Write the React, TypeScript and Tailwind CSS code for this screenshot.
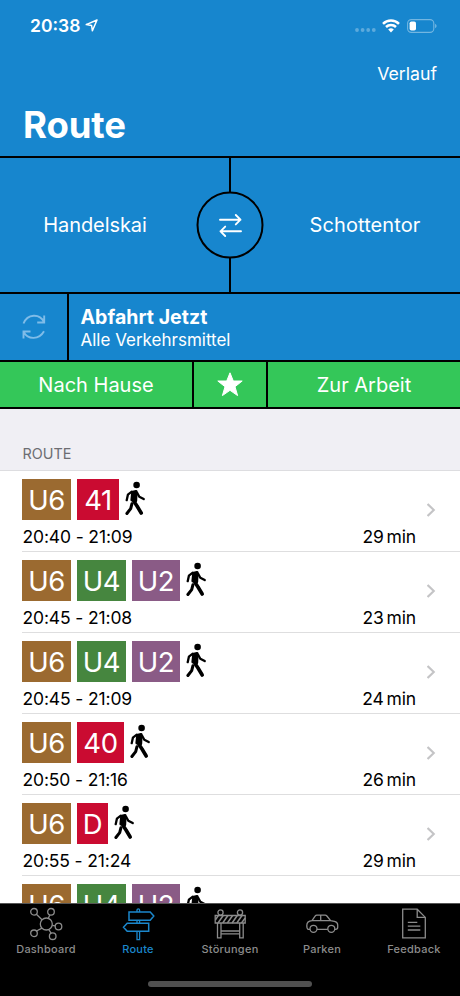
import type { ReactNode } from 'react'

type Line = { name: string; style: string }

type Connection = {
  lines: Line[]
  time: string
  duration: number
}

const U6: Line = { name: 'U6', style: 'w-[49px] bg-[#9b6a30]' }
const U4: Line = { name: 'U4', style: 'w-[49px] bg-[#46863f]' }
const U2: Line = { name: 'U2', style: 'w-[48px] bg-[#8a5b86]' }
const T41: Line = { name: '41', style: 'w-[42px] bg-[#ca0b31]' }
const T40: Line = { name: '40', style: 'w-[47px] bg-[#ca0b31]' }
const TD: Line = { name: 'D', style: 'w-[31px] bg-[#ca0b31]' }

const CONNECTIONS: Connection[] = [
  { lines: [U6, T41], time: '20:40 - 21:09', duration: 29 },
  { lines: [U6, U4, U2], time: '20:45 - 21:08', duration: 23 },
  { lines: [U6, U4, U2], time: '20:45 - 21:09', duration: 24 },
  { lines: [U6, T40], time: '20:50 - 21:16', duration: 26 },
  { lines: [U6, TD], time: '20:55 - 21:24', duration: 29 },
  { lines: [U6, U4, U2], time: '', duration: 0 },
]

function StatusBar() {
  return (
    <div className="flex h-[51px] items-center justify-between pr-[23px] pl-[30px]">
      <div className="flex items-center gap-[4.5px]">
        <span className="text-[17.5px] leading-none font-semibold">20:38</span>
        <svg width="13" height="13" viewBox="0 0 13 13" fill="none" stroke="currentColor" strokeWidth="1.5" strokeLinejoin="round">
          <path d="M12 1 1.2 5.6l5.4.9.8 5.3z" />
        </svg>
      </div>
      <div className="flex items-center">
        <svg width="21" height="4" viewBox="0 0 21 4" fill="currentColor" className="mt-[9px] mr-[6px] opacity-30">
          <circle cx="2" cy="2" r="1.9" />
          <circle cx="7.6" cy="2" r="1.9" />
          <circle cx="13.2" cy="2" r="1.9" />
          <circle cx="18.8" cy="2" r="1.9" />
        </svg>
        <svg width="18" height="14" viewBox="0 0 18 14" fill="none" stroke="currentColor" strokeWidth="2.5" className="mr-[7px]">
          <path d="M1 4.8a11.4 11.4 0 0 1 16 0" />
          <path d="M4 8a7.2 7.2 0 0 1 10 0" />
          <path d="M9 13.4 6.2 10.6a4 4 0 0 1 5.6 0z" fill="currentColor" stroke="none" />
        </svg>
        <svg width="30" height="14" viewBox="0 0 30 14">
          <rect x="0.6" y="0.6" width="26.2" height="12.8" rx="3.8" fill="none" stroke="#fff" strokeOpacity="0.4" strokeWidth="1.1" />
          <rect x="2.6" y="2.4" width="6.4" height="9.2" rx="1.8" fill="#fff" />
          <path d="M28.2 4.8c1.8.7 1.8 3.7 0 4.4z" fill="#fff" fillOpacity="0.45" />
        </svg>
      </div>
    </div>
  )
}

function Walker() {
  return (
    <svg width="20" height="35" viewBox="0 0 20 35" className="mt-[2px]" fill="none" stroke="#000" strokeLinecap="round" strokeLinejoin="round">
      <circle cx="11.6" cy="4" r="3.3" fill="#000" stroke="none" />
      <path d="M7.8 11.2 11 10.6 10.6 19.6 7 19z" fill="#000" strokeWidth="3.2" />
      <path d="M6.8 10.7 2.9 13.7 1.7 19.2" strokeWidth="2.3" />
      <path d="M12 11.6 14.3 15.7 18.7 18.1" strokeWidth="2.3" />
      <path d="M9 20.5 12 25 16.2 32" strokeWidth="3.6" />
      <path d="M6.9 22.8 5.7 27.6 1.9 32.5" strokeWidth="3" />
    </svg>
  )
}

function ConnectionRow({ connection }: { connection: Connection }) {
  return (
    <li className="flex h-[81px] shrink-0 pl-[22px]">
      <div className="flex flex-1 items-start border-b border-[#dededf] pr-[24px]">
        <div className="min-w-0 flex-1 pt-[8px]">
          <div className="flex items-start gap-[6px]">
            {connection.lines.map((line) => (
              <span
                key={line.name}
                className={`flex h-[41px] items-center justify-center pt-[3px] text-[27.5px] leading-none font-normal tracking-[-0.4px] text-white ${line.style}`}
              >
                {line.name}
              </span>
            ))}
            <Walker />
          </div>
          {connection.time && (
            <div className="mt-[6px] flex justify-between pr-[20px] pl-[0.5px] text-[17.5px] leading-[22px]">
              <span className="tracking-[-0.14px]">{connection.time}</span>
              <span className="tracking-[-0.15px] [word-spacing:-2px]">{connection.duration} min</span>
            </div>
          )}
        </div>
        <svg width="9" height="14" viewBox="0 0 9 14" fill="none" stroke="#c4c4c6" strokeWidth="2.1" className="mt-[32px] -ml-[9px]">
          <path d="m.6 1 6.2 6L.6 13" />
        </svg>
      </div>
    </li>
  )
}

const TABS: { label: string; icon: ReactNode }[] = [
  {
    label: 'Dashboard',
    icon: (
      <>
        <circle cx="16.3" cy="17" r="6" />
        <circle cx="4" cy="4.8" r="3.3" />
        <circle cx="21" cy="4.8" r="3.3" />
        <circle cx="28.5" cy="19.5" r="3.3" />
        <circle cx="4" cy="26.3" r="3.3" />
        <circle cx="22.7" cy="29.2" r="3.3" />
        <path d="m6.4 7.2 5.6 5.6M19.8 7.9l-1.5 3.4M22.2 18.3l3 .6M6.5 24l5.5-2.8M18.8 22.5l2.4 3.8" />
      </>
    ),
  },
  {
    label: 'Route',
    icon: (
      <>
        <path d="M15 5V3.2a1.3 1.3 0 0 1 2.6 0V5M15 13.2v3M17.6 13.2v3M15 24.2v8.4h2.6v-8.4" />
        <path d="M7 5h21.2l3.6 4-3.6 4.200H7z" strokeWidth="1.5" />
        <path d="M26.7 16.2H5.2l-3.7 4 3.7 4h21.5z" strokeWidth="1.5" />
      </>
    ),
  },
  {
    label: 'Störungen',
    icon: (
      <>
        <circle cx="6.5" cy="5.5" r="2.6" />
        <circle cx="26" cy="5.5" r="2.6" />
        <path d="M1.2 8.5h30V16h-30zM3.5 16v14.8H7V16M25.700 16v14.8h3.500V16M7 24h18.700M7 26.800h18.700" />
        <path d="m1.5 12.8 2.8-4.3M4 16l5.200-7.500M8.700 16l5.200-7.500M13.400 16l5.200-7.500M18.100 16l5.200-7.500M22.800 16l5.200-7.500M27.500 16l3.700-5" strokeWidth="1.5" />
      </>
    ),
  },
  {
    label: 'Parken',
    icon: (
      <>
        <circle cx="7.5" cy="21.8" r="3.5" />
        <circle cx="25.3" cy="21.8" r="3.5" />
        <path d="M4 22.3H2.2C1 22 .8 21 .8 18.5c0-3 1.2-4.5 5.2-4.8l3.3-4.8c.4-.6.8-.8 1.5-.8h8.4c.8 0 1.200.3 1.700.9l3.700 4.700 3.800.6c2 .4 3.300 1.600 3.300 3.600v2.400c0 1.300-.6 2-2 2h-.9M11 22.300h10.800M6 13.700h18.600M14.700 8.100v5.600" />
      </>
    ),
  },
  {
    label: 'Feedback',
    icon: (
      <>
        <path d="M4.7 2.2h14.5l8.1 8.2v20.5H4.7z" />
        <path d="M19.2 2.2v8.2h8.1M9.8 15.3h9.5M9.8 19.2h12.500M9.800 23h12.500" />
      </>
    ),
  },
]

function TabBar({ active }: { active: string }) {
  return (
    <nav className="flex h-[93px] shrink-0 flex-col items-center border-t border-[#555] bg-black">
      <div className="flex w-full">
        {TABS.map((tab) => (
          <div
            key={tab.label}
            className={`flex flex-1 flex-col items-center pt-[3px] ${tab.label === active ? 'text-[#1b87cc]' : 'text-[#8c8c8c]'}`}
          >
            <svg width="33" height="34" viewBox="0 0 33 34" fill="none" stroke="currentColor" strokeWidth="1.3">
              {tab.icon}
            </svg>
            <span className="mt-px text-[11px] leading-[14px] font-medium tracking-[0.25px]">
              {tab.label}
            </span>
          </div>
        ))}
      </div>
      <div className="mt-[25px] h-[6px] w-[164px] rounded-full bg-[#505050]" />
    </nav>
  )
}

export default function App() {
  return (
    <div className="flex h-[996px] w-[460px] flex-col overflow-hidden bg-white font-['Inter','Liberation_Sans',sans-serif] text-black">
      <header className="shrink-0 bg-[#1786ce] text-white">
        <div className="h-[156px]">
          <StatusBar />
          <div className="flex h-[46px] items-center justify-end pr-[23px] text-[17.7px]">
            Verlauf
          </div>
          <h1 className="pl-[23px] text-[36.5px] leading-[57px] font-bold tracking-[-0.1px]">Route</h1>
        </div>

        <div className="relative flex h-[138px] border-y-2 border-black text-[20px]">
          <div className="flex flex-1 items-center justify-center border-r border-black pr-[39px] tracking-[-0.1px]">
            Handelskai
          </div>
          <div className="flex flex-1 items-center justify-center border-l border-black pl-[39px] tracking-[0.1px]">
            Schottentor
          </div>
          <div className="absolute top-1/2 left-1/2 flex h-[67px] w-[67px] -translate-x-1/2 -translate-y-1/2 items-center justify-center rounded-full border-2 border-black bg-[#1786ce]">
            <svg width="24" height="24" viewBox="0 0 24 24" fill="none" stroke="currentColor" strokeWidth="1.9" strokeLinecap="round" strokeLinejoin="round">
              <path d="M1.5 6.2H22M17.3 1.5 22 6.200l-4.700 4.700M22.500 17.800H2M6.700 13.100 2 17.800l4.700 4.700" />
            </svg>
          </div>
        </div>

        <div className="flex h-[66px]">
          <div className="flex w-[69px] items-center justify-center border-r-2 border-black">
            <svg width="24" height="26" viewBox="0 0 24 26" fill="none" stroke="#7fbce8" strokeWidth="1.9">
              <path d="M1.5 9.500C5.500-.2 17.500-.8 22 8M22.200 1.500v7h-7M22 17.200c-4.800 8.500-16 9-20.500.5M1.500 24.500v-7h7" />
            </svg>
          </div>
          <div className="flex flex-col justify-center pt-[3px] pl-[11.5px]">
            <span className="text-[19.5px] leading-[23px] font-bold tracking-[0.05px]">Abfahrt Jetzt</span>
            <span className="text-[17px] leading-[22px]">Alle Verkehrsmittel</span>
          </div>
        </div>

        <div className="flex h-[49px] border-y-2 border-black bg-[#34c759] text-[20px]">
          <div className="flex w-[194px] items-center justify-center border-r-2 border-black">
            Nach Hause
          </div>
          <div className="flex w-[74px] items-center justify-center border-r-2 border-black">
            <svg width="26" height="25" viewBox="0 0 26 25" fill="currentColor" stroke="currentColor" strokeLinejoin="round">
              <path d="m13 .8 3.3 8.200h8.900l-7.200 5.700 2.600 8.900-7.600-5.300-7.600 5.300L8 14.700.8 9h8.900z" />
            </svg>
          </div>
          <div className="flex flex-1 items-center justify-center">Zur Arbeit</div>
        </div>
      </header>

      <div className="flex h-[62px] shrink-0 items-end border-b border-[#dddde0] bg-[#f0eff4] pb-[6px] pl-[22.5px] text-[14.4px] leading-[20px] text-[#6d6d72]">
        ROUTE
      </div>

      <ul className="flex min-h-0 flex-1 flex-col overflow-hidden">
        {CONNECTIONS.map((c, i) => (
          <ConnectionRow key={i} connection={c} />
        ))}
      </ul>

      <TabBar active="Route" />
    </div>
  )
}
